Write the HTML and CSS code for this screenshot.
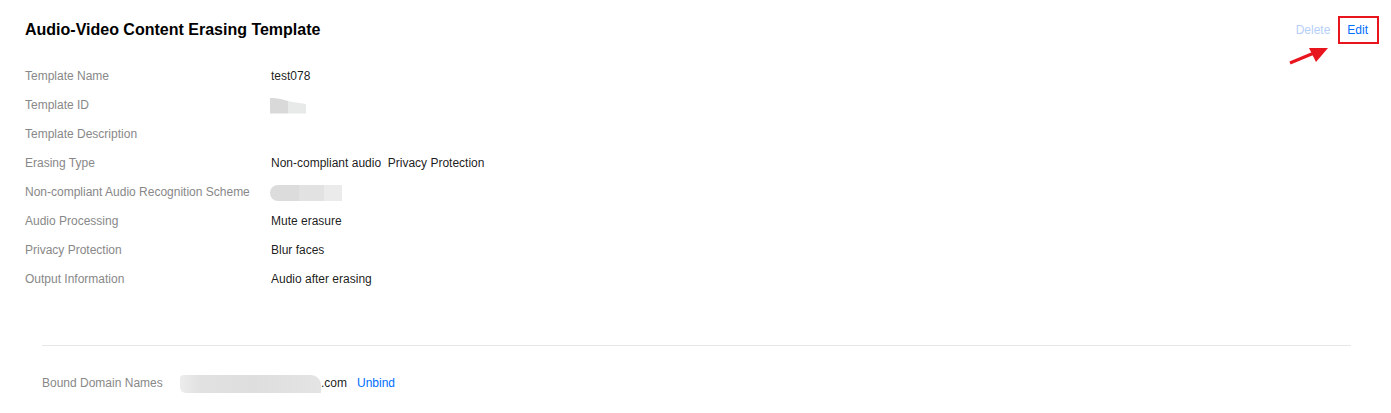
FILE: index.html
```html
<!DOCTYPE html>
<html lang="en">
<head>
    <meta charset="UTF-8">
    <meta name="viewport" content="width=device-width, initial-scale=1.0">
    <title>Audio-Video Content Erasing Template</title>
    <link rel="stylesheet" href="styles.css">
</head>
<body>
    <div class="page">
        <div class="header">
            <h2 class="title">Audio-Video Content Erasing Template</h2>
            <div class="actions">
                <span class="link disabled">Delete</span>
                <span class="link edit">Edit</span>
            </div>
        </div>

        <svg class="arrow" width="50" height="30" viewBox="0 0 50 30">
            <line x1="2" y1="27" x2="26" y2="17" stroke="#e8141e" stroke-width="3"/>
            <polygon points="40,12 21,12 28,26" fill="#e8141e"/>
        </svg>

        <div class="info">
            <div class="label">Template Name</div>
            <div class="value">test078</div>
            <div class="label">Template ID</div>
            <div class="value"><span class="mask mask-id"></span></div>
            <div class="label">Template Description</div>
            <div class="value"></div>
            <div class="label">Erasing Type</div>
            <div class="value">Non-compliant audio&nbsp; Privacy Protection</div>
            <div class="label">Non-compliant Audio Recognition Scheme</div>
            <div class="value"><span class="mask mask-scheme"></span></div>
            <div class="label">Audio Processing</div>
            <div class="value">Mute erasure</div>
            <div class="label">Privacy Protection</div>
            <div class="value">Blur faces</div>
            <div class="label">Output Information</div>
            <div class="value">Audio after erasing</div>
        </div>

        <div class="domains">
            <div class="label domain-label">Bound Domain Names</div>
            <div class="value domain-value">
                <span class="mask mask-domain"></span>.com
                <span class="link unbind">Unbind</span>
            </div>
        </div>
    </div>
</body>
</html>
```

FILE: styles.css
```css
body {
    margin: 0;
    padding: 0;
    background-color: #fff;
    font-family: 'Liberation Sans', Arial, sans-serif;
    font-size: 12px;
    color: rgba(0, 0, 0, 0.9);
}

.page {
    position: relative;
    padding: 18px 12px 0 25px;
}

.header {
    display: flex;
    justify-content: space-between;
    align-items: center;
    height: 24px;
}

.title {
    margin: 0;
    font-size: 16px;
    font-weight: bold;
    line-height: 24px;
    color: #000;
}

.actions {
    display: flex;
    align-items: center;
    gap: 8px;
}

.link {
    color: #006eff;
    cursor: pointer;
}

.link.disabled {
    color: #b5cff7;
    cursor: default;
}

.edit {
    display: inline-block;
    border: 2px solid #e8141e;
    padding: 5px 9px 5px 7px;
    line-height: 14px;
}

.arrow {
    position: absolute;
    left: 1288px;
    top: 36px;
}

.info {
    display: grid;
    grid-template-columns: 246px 1fr;
    grid-auto-rows: 29px;
    margin-top: 20px;
}

.label {
    color: #888;
    line-height: 29px;
}

.value {
    line-height: 29px;
    display: flex;
    align-items: center;
}

.mask {
    display: inline-block;
    background: linear-gradient(90deg, #d9d9d9 0, #d9d9d9 50%, #e8e9e9 50%, #e8e9e9 100%);
}

.mask-id {
    width: 36px;
    height: 16px;
    margin-left: -1px;
    clip-path: polygon(0 0, 30% 10%, 55% 25%, 100% 40%, 100% 100%, 0 100%);
}

.mask-scheme {
    width: 72px;
    height: 16px;
    margin-left: -1px;
    border-radius: 8px 0 0 8px;
    background: linear-gradient(90deg, #dcdcdc 0, #dcdcdc 40%, #e2e2e2 40%, #e2e2e2 75%, #ebebeb 75%);
}

.domains {
    display: flex;
    align-items: center;
    margin: 51px 28px 0 17px;
    padding-top: 23px;
    border-top: 1px solid #e7e7e7;
}

.domain-label {
    width: 138px;
}

.mask-domain {
    width: 141px;
    height: 18px;
    border-radius: 4px 10px 0 6px;
    background: linear-gradient(90deg, #ececec 0, #e1e1e1 15%, #dedede 50%, #e4e4e4 100%);
}

.unbind {
    margin-left: 10px;
}
```
